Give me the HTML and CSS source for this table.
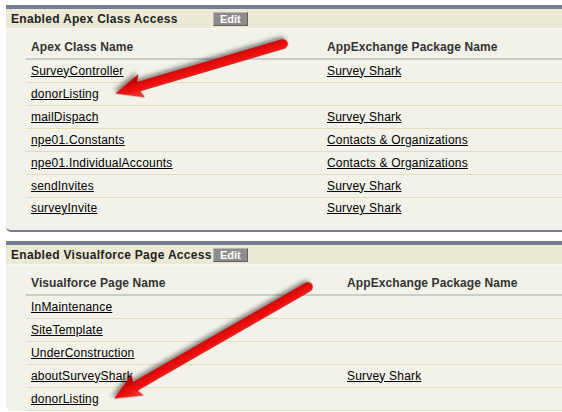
FILE: index.html
```html
<!DOCTYPE html>
<html lang="en">
<head>
    <meta charset="UTF-8">
    <title>Enabled Access</title>
    <link rel="stylesheet" href="styles.css">
</head>
<body>
    <div class="page">

        <div class="section">
            <div class="section-header">
                <div class="section-title">Enabled Apex Class Access</div>
                <button class="edit-btn">Edit</button>
            </div>
            <div class="section-body">
                <table class="data-table">
                    <tr>
                        <th class="col-apex">Apex Class Name</th>
                        <th>AppExchange Package Name</th>
                    </tr>
                    <tr><td><a href="#">SurveyController</a></td><td><a href="#">Survey Shark</a></td></tr>
                    <tr><td><a href="#">donorListing</a></td><td></td></tr>
                    <tr><td><a href="#">mailDispach</a></td><td><a href="#">Survey Shark</a></td></tr>
                    <tr><td><a href="#">npe01.Constants</a></td><td><a href="#">Contacts &amp; Organizations</a></td></tr>
                    <tr><td><a href="#">npe01.IndividualAccounts</a></td><td><a href="#">Contacts &amp; Organizations</a></td></tr>
                    <tr><td><a href="#">sendInvites</a></td><td><a href="#">Survey Shark</a></td></tr>
                    <tr class="last"><td><a href="#">surveyInvite</a></td><td><a href="#">Survey Shark</a></td></tr>
                </table>
            </div>
        </div>

        <div class="section cut">
            <div class="section-header">
                <div class="section-title">Enabled Visualforce Page Access</div>
                <button class="edit-btn">Edit</button>
            </div>
            <div class="section-body">
                <table class="data-table">
                    <tr>
                        <th class="col-vf">Visualforce Page Name</th>
                        <th>AppExchange Package Name</th>
                    </tr>
                    <tr><td><a href="#">InMaintenance</a></td><td></td></tr>
                    <tr><td><a href="#">SiteTemplate</a></td><td></td></tr>
                    <tr><td><a href="#">UnderConstruction</a></td><td></td></tr>
                    <tr><td><a href="#">aboutSurveyShark</a></td><td><a href="#">Survey Shark</a></td></tr>
                    <tr><td><a href="#">donorListing</a></td><td></td></tr>
                </table>
            </div>
        </div>

    </div>

    <!-- annotation arrows drawn over the screenshot -->
    <svg class="arrows" width="562" height="412" viewBox="0 0 562 412">
        <defs>
            <linearGradient id="redFill" x1="0" y1="0" x2="0" y2="1">
                <stop offset="0" stop-color="#ff4236"/>
                <stop offset="0.45" stop-color="#ee0a0a"/>
                <stop offset="1" stop-color="#b30000"/>
            </linearGradient>
            <filter id="shadow" x="-20%" y="-50%" width="140%" height="200%">
                <feDropShadow dx="1.5" dy="3" stdDeviation="2" flood-color="#000" flood-opacity="0.45"/>
            </filter>
        </defs>
        <g transform="translate(283 44) rotate(163.55)" filter="url(#shadow)">
            <path d="M0,-4.5 L151,-4.5 L148,-11.5 L174,0 L148,11.5 L151,4.5 L0,4.5 A4.5,4.5 0 0 1 0,-4.5 Z"
                  fill="url(#redFill)" stroke="#a80000" stroke-width="0.6"/>
        </g>
        <g transform="translate(308 287) rotate(150.1)" filter="url(#shadow)">
            <path d="M0,-4.5 L200,-4.5 L197,-11.5 L223,0 L197,11.5 L200,4.5 L0,4.5 A4.5,4.5 0 0 1 0,-4.5 Z"
                  fill="url(#redFill)" stroke="#a80000" stroke-width="0.6"/>
        </g>
    </svg>
</body>
</html>
```

FILE: styles.css
```css
body {
    margin: 0;
    background: #fff;
    font-family: "Liberation Sans", Arial, sans-serif;
    font-size: 12px;
    color: #000;
    overflow: hidden;
    position: relative;
    height: 412px;
}
.page {
    padding: 5px 0 0 6px;
}
.section {
    border-top: 4px solid #747e96;
    border-bottom: 2px solid #747e96;
    border-bottom-left-radius: 5px;
    background: #f3f2ea;
    margin-bottom: 9px;
}
/* second block runs off the bottom of the shot */
.section.cut {
    border-bottom: none;
    margin-bottom: 0;
}
.section.cut .section-body {
    padding-bottom: 0;
}
.section-header {
    display: flex;
    align-items: center;
    height: 20px;
    background: #ecead5;
    border-bottom: 1px solid #f8f7f1;
    box-sizing: border-box;
}
.section-title {
    min-width: 207px;
    box-sizing: border-box;
    padding: 0 1px 0 5px;
    font-weight: 700;
    letter-spacing: 0.3px;
    color: #222;
    white-space: nowrap;
}
.edit-btn {
    height: 14px;
    padding: 0 6px;
    font-family: "Liberation Sans", Arial, sans-serif;
    font-size: 11px;
    font-weight: 700;
    line-height: 12px;
    color: #fff;
    background: #8c8c8c;
    border: 1px solid;
    border-color: #b5b5b5 #5e5e5e #5e5e5e #b5b5b5;
    border-radius: 0;
    cursor: pointer;
}
.section-body {
    padding: 6px 0 11px 20px;
}
.data-table {
    width: 100%;
    border-collapse: collapse;
    table-layout: fixed;
}
.data-table th,
.data-table td {
    box-sizing: border-box;
    padding: 0 5px;
    text-align: left;
    vertical-align: middle;
    white-space: nowrap;
}
.data-table th {
    height: 24px;
    font-weight: 700;
    color: #333;
    letter-spacing: 0.1px;
    border-bottom: 2px solid #cbcbc8;
}
.data-table td {
    height: 23px;
    border-bottom: 1px solid #e3deb8;
    letter-spacing: 0.2px;
}
.data-table tr.last td {
    border-bottom: none;
    height: 22px;
}
.data-table .col-apex {
    width: 296px;
}
.data-table .col-vf {
    width: 316px;
}
.data-table a {
    color: #000;
    text-decoration: underline;
}
.arrows {
    position: absolute;
    top: 0;
    left: 0;
    pointer-events: none;
}
```
